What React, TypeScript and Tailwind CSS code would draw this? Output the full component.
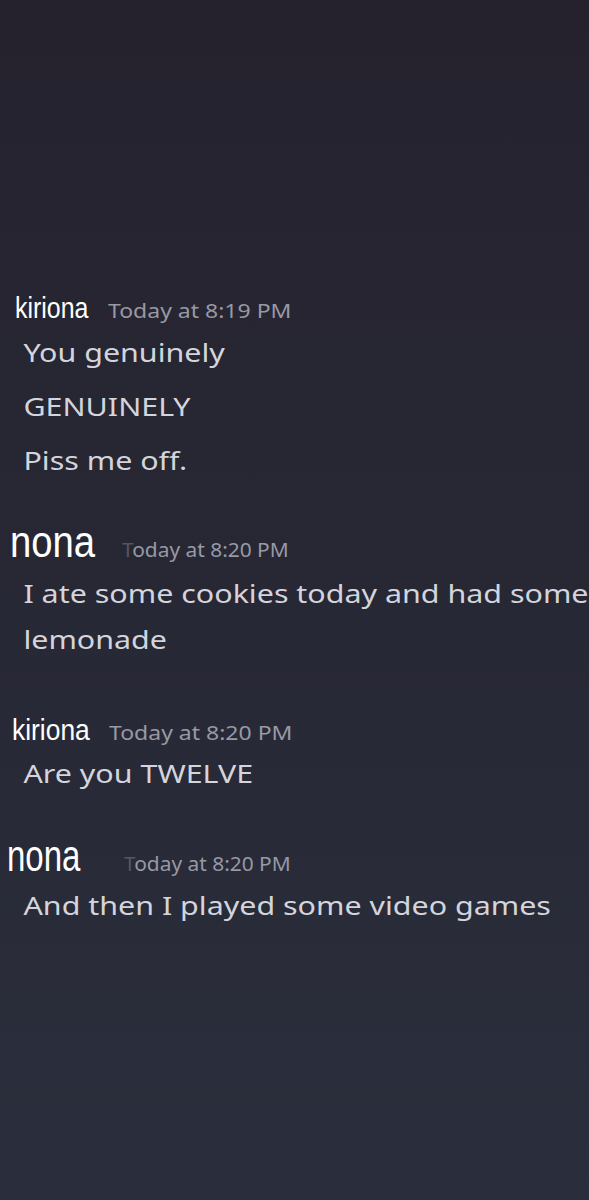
export default function App() {
  const body =
    "font-['Noto_Sans',sans-serif] text-[26px] leading-[34px] text-[#d4d5dc] whitespace-nowrap origin-left scale-x-[1.17]";
  const stamp =
    "inline-block font-['Noto_Sans',sans-serif] text-[20px] leading-none text-[#9799a4] whitespace-nowrap origin-left";
  const name =
    "inline-block font-['Liberation_Sans','Arial',sans-serif] leading-none text-white origin-left";

  return (
    <div className="w-[589px] h-[1200px] overflow-hidden bg-gradient-to-b from-[#25222e] to-[#2a2e3c] flex flex-col">
      <div className="h-[293px]" />

      {/* kiriona */}
      <div className="flex items-baseline pl-[15px] gap-[5px]">
        <span className={`${name} text-[30px] scale-x-[0.83]`}>kiriona</span>
        <span className={`${stamp} scale-x-[1.15]`}>Today at 8:19 PM</span>
      </div>
      <div className={`${body} pl-[20px] mt-[12px]`}>You genuinely</div>
      <div className={`${body} pl-[20px] mt-[20px]`}>GENUINELY</div>
      <div className={`${body} pl-[20px] mt-[20px]`}>Piss me off.</div>

      {/* nona */}
      <div className="flex items-baseline pl-[10px] gap-[14px] mt-[43px]">
        <span className={`${name} text-[44px] scale-x-[0.87]`}>nona</span>
        <span className={`${stamp} scale-x-[1.045]`}>
          <span className="opacity-40">T</span>oday at 8:20 PM
        </span>
      </div>
      <div className={`${body} pl-[20px] mt-[12px]`}>I ate some cookies today and had some</div>
      <div className={`${body} pl-[20px] mt-[12px]`}>lemonade</div>

      {/* kiriona */}
      <div className="flex items-baseline pl-[12px] gap-[9px] mt-[59px]">
        <span className={`${name} text-[30px] scale-x-[0.88]`}>kiriona</span>
        <span className={`${stamp} scale-x-[1.15]`}>Today at 8:20 PM</span>
      </div>
      <div className={`${body} pl-[20px] mt-[11px]`}>Are you TWELVE</div>

      {/* nona */}
      <div className="flex items-baseline pl-[7px] gap-[19px] mt-[44px]">
        <span className={`${name} text-[44px] scale-x-[0.75]`}>nona</span>
        <span className={`${stamp} scale-x-[1.045]`}>
          <span className="opacity-40">T</span>oday at 8:20 PM
        </span>
      </div>
      <div className={`${body} pl-[20px] mt-[10px]`}>And then I played some video games</div>
    </div>
  );
}
